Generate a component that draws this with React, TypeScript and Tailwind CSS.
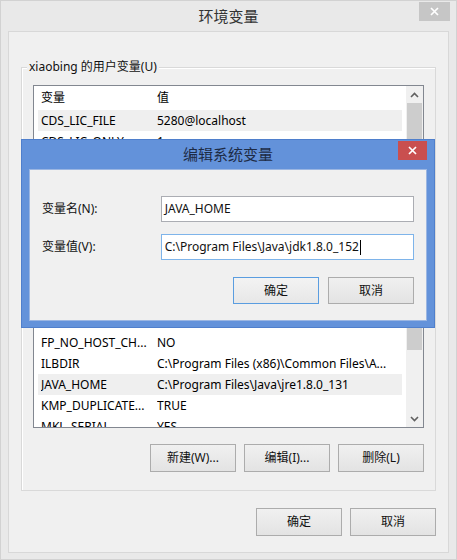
import React from "react";

const FONT = "font-['Segoe_UI','Noto_Sans','Noto_Sans_CJK_SC',sans-serif]";

function Chevron({ up }: { up?: boolean }) {
  return (
    <svg width="9" height="6" viewBox="0 0 9 6" className="block">
      <polyline
        points={up ? "1,5 4.5,1.5 8,5" : "1,1 4.5,4.5 8,1"}
        fill="none"
        stroke="#606060"
        strokeWidth="1.6"
      />
    </svg>
  );
}

function Btn({ children, primary, w = "w-[86px]", h = "h-[28px]" }: { children: React.ReactNode; primary?: boolean; w?: string; h?: string }) {
  return (
    <div
      className={`${w} ${h} flex items-center justify-center text-[12px] text-[#111] border ${
        primary
          ? "border-[#5a9de0] bg-gradient-to-b from-[#f3f3f3] to-[#e7e7e7]"
          : "border-[#acacac] bg-gradient-to-b from-[#f0f0f0] to-[#e3e3e3]"
      }`}
    >
      {children}
    </div>
  );
}

function Row({ name, value, sel }: { name: string; value: string; sel?: boolean }) {
  return (
    <div className={`h-[21px] shrink-0 flex items-center pl-[3px] text-[12px] text-black whitespace-nowrap ${sel ? "bg-[#efefef]" : ""}`}>
      <div className="w-[116px] overflow-hidden">{name}</div>
      <div className="flex-1 overflow-hidden">{value}</div>
    </div>
  );
}

export default function App() {
  return (
    <div className={`relative w-[457px] h-[560px] bg-[#e9e9e9] border border-[#d2d2d2] ${FONT} flex flex-col overflow-hidden`}>
      {/* title bar */}
      <div className="relative h-[30px] flex items-center justify-center text-[15px] text-[#333] shrink-0">
        环境变量
        <div className="absolute left-[418px] top-[1px] w-[31px] h-[19px] bg-[#c6c6c6] flex items-center justify-center">
          <svg width="9" height="9" viewBox="0 0 9 9">
            <path d="M1 1 L8 8 M8 1 L1 8" stroke="#fff" strokeWidth="1.7" />
          </svg>
        </div>
      </div>

      {/* content */}
      <div className="mx-[7px] h-[522px] bg-[#f0f0f0] border border-[#d8d8d8] flex flex-col px-[12px]">
        {/* groupbox */}
        <div className="relative mt-[35px] h-[424px] shrink-0 border border-[#d9d9d9] shadow-[inset_1px_1px_0_#ffffff] flex flex-col px-[11px]">
          <div className="absolute left-[5px] top-[-9px] px-[2px] bg-[#f0f0f0] text-[12px] leading-[16px] text-[#111]">
            xiaobing 的用户变量(U)
          </div>
          {/* list */}
          <div className="mt-[17px] h-[343px] shrink-0 border border-[#828790] bg-white flex overflow-hidden">
            <div className="flex-1 flex flex-col px-[4px] overflow-hidden">
              <div className="h-[24px] shrink-0 flex items-center pl-[3px] text-[12px] text-black">
                <div className="w-[116px]">变量</div>
                <div>值</div>
              </div>
              <Row name="CDS_LIC_FILE" value="5280@localhost" sel />
              <Row name="CDS_LIC_ONLY" value="1" />
              <div className="h-[180px] shrink-0" />
              <Row name="FP_NO_HOST_CH..." value="NO" />
              <Row name="ILBDIR" value="C:\Program Files (x86)\Common Files\A..." />
              <Row name="JAVA_HOME" value="C:\Program Files\Java\jre1.8.0_131" sel />
              <Row name="KMP_DUPLICATE..." value="TRUE" />
              <Row name="MKL_SERIAL" value="YES" />
            </div>
            <div className="w-[17px] shrink-0 bg-[#f0f0f0] flex flex-col">
              <div className="h-[17px] shrink-0 flex items-center justify-center">
                <Chevron up />
              </div>
              <div className="h-[247px] shrink-0 mx-[1px] bg-[#cdcdcd]" />
              <div className="flex-1" />
              <div className="h-[17px] shrink-0 flex items-center justify-center">
                <Chevron />
              </div>
            </div>
          </div>
          <div className="mt-[16px] flex justify-end gap-[8px]">
            <Btn>新建(W)...</Btn>
            <Btn>编辑(I)...</Btn>
            <Btn>删除(L)</Btn>
          </div>
        </div>
        <div className="mt-[17px] flex justify-end gap-[8px]">
          <Btn>确定</Btn>
          <Btn>取消</Btn>
        </div>
      </div>

      {/* modal dialog */}
      <div className="absolute left-[20px] top-[138px] w-[414px] h-[189px] bg-[#6392da] border border-[#4f7fcc] flex flex-col px-[7px] pb-[6px]">
        <div className="relative h-[29px] shrink-0 flex items-center justify-center text-[15px] text-[#1d2b45]">
          编辑系统变量
          <div className="absolute right-[0px] top-[1px] w-[29px] h-[19px] bg-[#c94f4f] flex items-center justify-center">
            <svg width="9" height="9" viewBox="0 0 9 9">
              <path d="M1 1 L8 8 M8 1 L1 8" stroke="#fff" strokeWidth="1.7" />
            </svg>
          </div>
        </div>
        <div className="flex-1 bg-[#f0f0f0] border border-[#9bb6e2] flex flex-col px-[12px] text-[12px] text-[#111]">
          <div className="mt-[26px] flex items-center">
            <div className="w-[119px]">变量名(N):</div>
            <div className="w-[254px] h-[26px] bg-white border border-[#abadb3] flex items-center pl-[3px]">JAVA_HOME</div>
          </div>
          <div className="mt-[12px] flex items-center">
            <div className="w-[119px]">变量值(V):</div>
            <div className="w-[254px] h-[26px] bg-white border border-[#7eb4ea] flex items-center pl-[3px]">
              C:\Program Files\Java\jdk1.8.0_152
              <span className="inline-block w-[1px] h-[15px] bg-black ml-[1px]" />
            </div>
          </div>
          <div className="mt-[17px] flex justify-end gap-[9px]">
            <Btn primary h="h-[27px]">确定</Btn>
            <Btn h="h-[27px]">取消</Btn>
          </div>
        </div>
      </div>
    </div>
  );
}
